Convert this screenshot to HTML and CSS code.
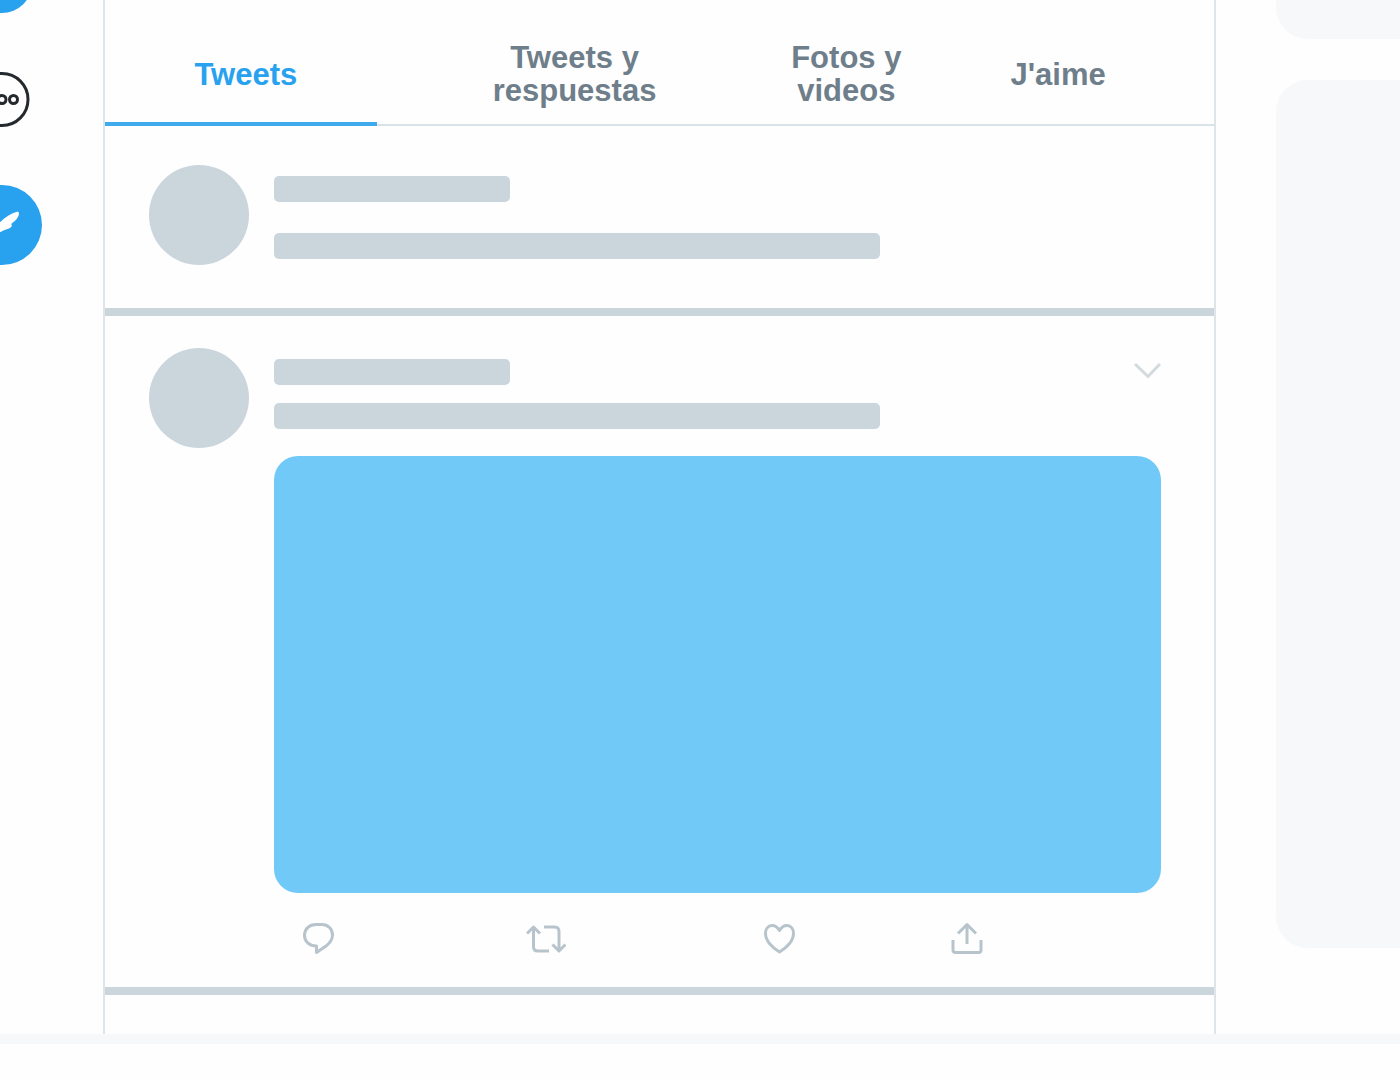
FILE: index.html
```html
<!DOCTYPE html>
<html lang="es">
	<head>
		<meta charset="utf-8" />
		<meta name="viewport" content="width=device-width, initial-scale=1" />
		<title>Tweets</title>
		<link rel="stylesheet" href="styles.css">
	</head>

	<body>
		<div class="layout">
			<nav class="sidebar">
				<a href="#" class="profile" aria-label="Profile"></a>
				<button class="icon-btn" aria-label="More">
					<svg width="56" height="56" viewBox="0 0 56 56" fill="none" stroke="#24292e" stroke-width="3">
						<circle cx="28" cy="28.5" r="26" />
						<circle cx="16" cy="28.5" r="4" />
						<circle cx="28" cy="28.5" r="4" />
						<circle cx="39.5" cy="28.5" r="4" />
					</svg>
				</button>
				<button class="compose" aria-label="Tweet">
					<svg width="80" height="80" viewBox="0 0 80 80" fill="#fff">
						<path d="M56 26.500C46 29 37 36 30 48L26 56L29 57L35 49C39 46.500 43 44.500 47 43.500C50 42 50.500 40 49 39C50 38.500 51 38 50.500 37.500C54 36 59 29 56 26.500Z" />
					</svg>
				</button>
			</nav>

			<main class="timeline">
				<div class="tabs">
					<a href="#" class="tab active">Tweets</a>
					<a href="#" class="tab">Tweets y<br />respuestas</a>
					<a href="#" class="tab">Fotos y<br />videos</a>
					<a href="#" class="tab">J'aime</a>
				</div>

				<article class="post">
					<div class="avatar"></div>
					<div class="post-body">
						<div class="post-head">
							<div class="line short"></div>
						</div>
						<div class="line long"></div>
					</div>
				</article>

				<article class="post with-media">
					<div class="avatar"></div>
					<div class="post-body">
						<div class="post-head">
							<div class="line short"></div>
							<button class="icon-btn" aria-label="Options">
								<svg width="28" height="20" viewBox="0 0 28 20" fill="none" stroke="#d3dade" stroke-width="3">
									<path d="M2 2L15 14.5L27 2" />
								</svg>
							</button>
						</div>
						<div class="line long"></div>
						<div class="media"></div>
						<div class="actions">
							<button class="icon-btn" aria-label="Reply">
								<svg width="40" height="40" viewBox="0 0 40 40">
									<path d="M18 5.5H24C30 5.5 34.5 10 34.5 16C34.5 21 32 24 28 27L18.5 33.5V27C11 27 6.500 22 6.500 16.500C6.500 10 11 5.500 18 5.500Z" />
								</svg>
							</button>
							<button class="icon-btn" aria-label="Retweet">
								<svg width="40" height="40" viewBox="0 0 40 40">
									<path d="M1 14.5L7.500 8L14 14.5M7.500 8.500V28Q7.500 32 12 32H23M18 8H28.500Q33 8 33 12.500V31.500M26.500 25.500L33 32L39.500 25.500" />
								</svg>
							</button>
							<button class="icon-btn" aria-label="Like">
								<svg width="40" height="40" viewBox="0 0 40 40">
									<path d="M19.500 11.500C17.500 8 15 6.500 12 6.500C8 6.500 5.500 10 5.500 14.500C5.500 22 12.500 29 19.500 33C26.500 29 33.500 22 33.500 14.500C33.500 10 31 6.500 27 6.500C24 6.500 21.500 8 19.500 11.500Z" />
								</svg>
							</button>
							<button class="icon-btn" aria-label="Share">
								<svg width="40" height="40" viewBox="0 0 40 40">
									<path d="M20 25V6M11 14.500L20 5.500L29 14.500M6 21V31Q6 33.500 8.500 33.500H31.500Q34 33.500 34 31V21" />
								</svg>
							</button>
						</div>
					</div>
				</article>
			</main>

			<aside class="widgets">
				<div class="widget top"></div>
				<div class="widget fill"></div>
			</aside>
		</div>
		<footer class="bottom-bar"></footer>
	</body>
</html>
```

FILE: styles.css
```css
* {
	box-sizing: border-box;
}

body {
	margin: 0;
	background: #fefefe;
	font-family: "Liberation Sans", Arial, sans-serif;
	overflow-x: hidden;
}

a {
	text-decoration: none;
}

svg {
	display: block;
}

.icon-btn {
	padding: 0;
	border: none;
	background: none;
	cursor: pointer;
}

.layout {
	display: grid;
	grid-template-columns: 103px 1fr 184px;
	overflow: hidden;
}

/* left icons, cut by the window edge */
.sidebar {
	display: flex;
	flex-direction: column;
	align-items: center;
	gap: 58px;
	width: 80px;
	margin: -47px 0 0 -38px;
}

.profile {
	width: 60px;
	height: 60px;
	border-radius: 50%;
	background: #28a2ef;
}

.compose {
	width: 80px;
	height: 80px;
	padding: 0;
	border: none;
	border-radius: 50%;
	background: #28a2ef;
	cursor: pointer;
}

.timeline {
	padding: 24px 0 39px;
	border-left: 2px solid #dde5e9;
	border-right: 2px solid #dde5e9;
}

.tabs {
	display: grid;
	grid-template-columns: 272fr 386fr 158fr 266fr;
	padding-right: 28px;
	box-shadow: inset 0 -2px #d8e2e7;
}

.tab {
	display: flex;
	align-items: center;
	justify-content: center;
	height: 102px;
	padding: 0 0 2px 10px;
	font-size: 31px;
	line-height: 33px;
	font-weight: bold;
	text-align: center;
	color: #6e7e8a;
}

.tab.active {
	color: #28a2ef;
	box-shadow: inset 0 -4px #3fabec;
}

.post {
	display: flex;
	gap: 25px;
	padding: 39px 53px 43px 44px;
	border-bottom: 8px solid #cad5dc;
}

.post.with-media {
	padding-top: 32px;
	padding-bottom: 28px;
}

.avatar {
	flex: none;
	width: 100px;
	height: 100px;
	border-radius: 50%;
	background: #cad5dc;
}

.post-body {
	flex: 1;
	padding-top: 11px;
}

.post-head {
	display: flex;
	align-items: center;
	justify-content: space-between;
	margin-bottom: 31px;
}

.with-media .post-head {
	margin-bottom: 18px;
}

.line {
	height: 26px;
	max-width: 100%;
	border-radius: 5px;
	background: #cad5dc;
}

.line.short {
	width: 236px;
}

.line.long {
	width: 606px;
}

.media {
	height: 437px;
	margin-top: 27px;
	border-radius: 24px;
	background: #71c9f8;
}

.actions {
	display: grid;
	grid-template-columns: 228fr 234fr 187fr 214fr;
	justify-items: start;
	margin-top: 26px;
	padding-left: 24px;
}

.actions svg {
	fill: none;
	stroke: #b7c4cc;
	stroke-width: 3;
	stroke-linejoin: round;
}

.widgets {
	display: flex;
	flex-direction: column;
	gap: 41px;
	padding: 0 0 86px 60px;
}

.widget {
	background: #f6f8fa;
}

.widget.top {
	height: 39px;
	border-radius: 0 0 0 32px;
}

.widget.fill {
	flex: 1;
	border-radius: 32px 0 0 32px;
}

.bottom-bar {
	height: 10px;
	background: #f6f8fa;
}
```
